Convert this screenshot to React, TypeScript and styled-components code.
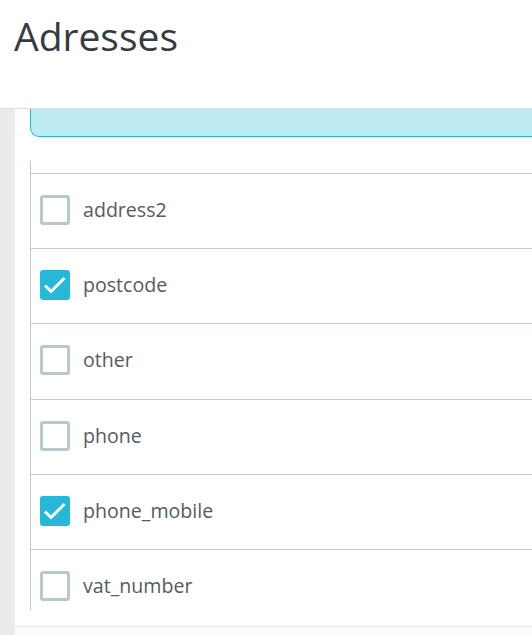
import React from "react";
import styled, { createGlobalStyle } from "styled-components";

const Global = createGlobalStyle`
  html, body { margin: 0; padding: 0; background: #fff; }
  body { font-family: "Open Sans", "Noto Sans", sans-serif; overflow: hidden; }
`;

const Page = styled.div`
  width: 532px;
  height: 635px;
  display: flex;
  flex-direction: column;
  overflow: hidden;
`;

const Header = styled.header`
  flex: none;
  border-bottom: 1px solid #dfdfdf;
  box-sizing: border-box;
  height: 109px;
  padding: 14px 0 0 14px;
`;

const Title = styled.h1`
  margin: 0;
  font-family: "Open Sans", sans-serif;
  font-weight: 400;
  font-size: 39px;
  line-height: 44px;
  color: #363a41;
`;

const Body = styled.div`
  flex: 1;
  display: flex;
  min-height: 0;
`;

const Sidebar = styled.div`
  width: 15px;
  flex: none;
  background: #e9ebec;
`;

const Main = styled.main`
  flex: 1;
  display: flex;
  flex-direction: column;
  min-width: 0;
`;

const Content = styled.div`
  padding: 0 0 0 15px;
  flex: none;
  height: 517px;
`;

const Alert = styled.div`
  height: 28px;
  box-sizing: border-box;
  margin-right: -20px;
  background: #beeaf3;
  border-left: 1px solid #25b9d7;
  border-bottom: 1px solid #25b9d7;
  border-bottom-left-radius: 9px;
`;

const List = styled.div`
  margin-top: 24px;
  border-left: 1px solid #bbcdd2;
  padding-top: 12px;
`;

const Row = styled.label<{ $last?: boolean }>`
  display: flex;
  align-items: center;
  gap: 13px;
  border-top: 1px solid #bbcdd2;
  padding: 21px 0 ${(p) => (p.$last ? "9px" : "23.2px")} 9px;
`;

const Box = styled.span<{ $checked?: boolean }>`
  width: 30px;
  height: 30px;
  box-sizing: border-box;
  border-radius: 3px;
  flex: none;
  display: flex;
  align-items: center;
  justify-content: center;
  border: ${(p) => (p.$checked ? "none" : "3px solid #b7c9ce")};
  background: ${(p) => (p.$checked ? "#25b9d7" : "#fff")};
`;

const Label = styled.span`
  font-size: 19.6px;
  line-height: 30px;
  color: #555b60;
`;

const Footer = styled.div`
  flex: 1;
  border-top: 1px solid #dde6e7;
  background: #fafbfc;
`;

const Check = () => (
  <svg width="30" height="30" viewBox="0 0 30 30">
    <path d="M5 15.5 L11 21.5 L24.5 8" fill="none" stroke="#fff" strokeWidth="3" />
  </svg>
);

const fields = [
  { name: "address2", checked: false },
  { name: "postcode", checked: true },
  { name: "other", checked: false },
  { name: "phone", checked: false },
  { name: "phone_mobile", checked: true },
  { name: "vat_number", checked: false },
];

export default function App() {
  return (
    <Page>
      <Global />
      <Header>
        <Title>Adresses</Title>
      </Header>
      <Body>
        <Sidebar />
        <Main>
          <Content>
            <Alert />
            <List>
              {fields.map((f, i) => (
                <Row key={f.name} $last={i === fields.length - 1}>
                  <Box $checked={f.checked}>{f.checked && <Check />}</Box>
                  <Label>{f.name}</Label>
                </Row>
              ))}
            </List>
          </Content>
          <Footer />
        </Main>
      </Body>
    </Page>
  );
}
